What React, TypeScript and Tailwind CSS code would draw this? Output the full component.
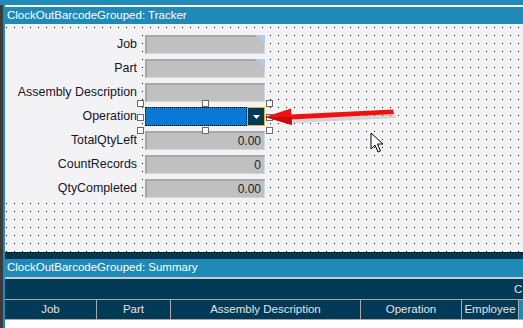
import React from 'react';

const dots =
  'bg-[#f3f3f5] bg-[image:conic-gradient(from_270deg_at_1px_1px,#000_90deg,transparent_0)] bg-[length:8px_8px] bg-[position:1px_3px]';

type Field = { label: string; value?: string; corner?: boolean; combo?: boolean };

const fields: Field[] = [
  { label: 'Job', corner: true },
  { label: 'Part', corner: true },
  { label: 'Assembly Description' },
  { label: 'Operation', combo: true },
  { label: 'TotalQtyLeft', value: '0.00' },
  { label: 'CountRecords', value: '0' },
  { label: 'QtyCompleted', value: '0.00' },
];

const columns = [
  { name: 'Job', w: 'w-[92px]' },
  { name: 'Part', w: 'w-[74px]' },
  { name: 'Assembly Description', w: 'w-[190px]' },
  { name: 'Operation', w: 'w-[101px]' },
  { name: 'Employee', w: 'w-[57px]' },
];

const Handle = ({ x, y }: { x: string; y: string }) => (
  <div className={`absolute ${x} ${y} w-[7px] h-[7px] bg-white border border-[#6b6b6b]`} />
);

const TextBox = ({ f }: { f: Field }) => {
  if (f.combo) {
    return (
      <div className="flex h-[19px] w-[120px]">
        <div className="h-full w-[102px] bg-[#e8892c]">
          <div className="h-full w-full border border-dotted border-black bg-[#0a78d6]" />
        </div>
        <div className="flex h-full w-[18px] items-center justify-center border border-[#e2b23f] bg-[#013a57]">
          <svg width="7" height="4" viewBox="0 0 7 4">
            <path d="M0 0 H7 L3.5 4 Z" fill="#fff" />
          </svg>
        </div>
      </div>
    );
  }
  return (
    <div className="relative flex h-[19px] w-[120px] items-center justify-end border-t-2 border-l-2 border-[#a7a7a7] border-r border-b border-r-[#d6d6d6] border-b-[#d6d6d6] bg-[#c0c0c0] pr-[3px] text-[12px] text-[#202020]">
      {f.value}
      {f.corner && (
        <svg className="absolute -top-[2px] -right-px" width="10" height="10" viewBox="0 0 10 10">
          <path d="M0 0 H10 V10 Z" fill="#b3c9e5" />
        </svg>
      )}
    </div>
  );
};

export default function App() {
  return (
    <div className="relative flex h-[328px] w-[523px] flex-col overflow-hidden bg-[#3b3b3b] font-['Liberation_Sans',Arial,sans-serif]">
      <div className="h-[5px] shrink-0 bg-[#1f89b8]" />
      <div className="flex min-h-0 flex-1">
        <div className="w-[3px] shrink-0 bg-[#3b3b3b]" />
        <div className="flex min-w-0 flex-1 flex-col border-l-2 border-[#1f89b8]">
          <div className="h-[2px] shrink-0 bg-white" />
          <div className="flex h-[17px] shrink-0 items-center bg-[#1f89b8] pl-[2px] text-[11.5px] text-white">
            ClockOutBarcodeGrouped: Tracker
          </div>

          {/* Tracker canvas */}
          <div className={`relative h-[228px] shrink-0 ${dots}`}>
            <div className="mt-[11px] flex flex-col gap-[5px]">
              {fields.map((f) => (
                <div key={f.label} className="flex h-[19px] items-center">
                  <div className="flex h-[24px] w-[132px] items-center justify-end bg-[#f3f3f5] text-[12.4px] text-[#14142a]">
                    {f.label}
                  </div>
                  <div className="w-[8px]" />
                  <TextBox f={f} />
                </div>
              ))}
            </div>
          </div>

          <div className="h-[7px] shrink-0 border-t border-[#0a1c26] bg-[#02354f]" />
          <div className="flex h-[18px] shrink-0 items-center bg-[#1f89b8] pl-[2px] text-[11.5px] text-white">
            ClockOutBarcodeGrouped: Summary
          </div>
          <div className="h-[2px] shrink-0 bg-[#c9c9c9]" />
          <div className="h-[20px] shrink-0 whitespace-nowrap bg-[#013a57] pl-[509px] text-[11.5px] leading-[20px] text-[#e4e4e4]">
            C
          </div>
          <div className="h-px shrink-0 bg-[#a9a9a9]" />
          <div className="flex h-[19px] shrink-0 bg-[#013a57] text-[11.5px] text-[#e4e4e4]">
            {columns.map((c) => (
              <div key={c.name} className={`${c.w} flex shrink-0 items-center justify-center whitespace-nowrap border-r border-[#a9a9a9]`}>
                {c.name}
              </div>
            ))}
            <div className="w-[4px] shrink-0 bg-[#1f89b8]" />
          </div>
          <div className="h-px shrink-0 bg-[#a9a9a9]" />
          <div className="flex-1 bg-white" />
        </div>
      </div>

      {/* selection handles around Operation */}
      <Handle x="left-[137px]" y="top-[100px]" />
      <Handle x="left-[202px]" y="top-[100px]" />
      <Handle x="left-[266px]" y="top-[100px]" />
      <Handle x="left-[137px]" y="top-[114px]" />
      <Handle x="left-[266px]" y="top-[114px]" />
      <Handle x="left-[137px]" y="top-[127px]" />
      <Handle x="left-[202px]" y="top-[127px]" />
      <Handle x="left-[266px]" y="top-[127px]" />

      {/* red arrow callout + cursor */}
      <svg className="absolute left-0 top-0" width="523" height="328" viewBox="0 0 523 328">
        <path d="M292 116 L394 111 L395 116 L292 121 Z" fill="#9a9a9a" opacity="0.35" transform="translate(1 2)" />
        <path d="M291 114.5 L393 109.5 L394 114 L291 119.5 Z" fill="#f01010" />
        <path d="M265 117 L291 108.5 L292 125 Z" fill="#f01010" />
        <path d="M265 117 L292 117 L292 125 Z" fill="#c80c0c" />
        <path d="M371 133 V149 L375 145 L378 152 L380.5 151 L377.5 144 L383 144 Z" fill="#fff" stroke="#000" strokeWidth="1" strokeLinejoin="miter" />
      </svg>
    </div>
  );
}
